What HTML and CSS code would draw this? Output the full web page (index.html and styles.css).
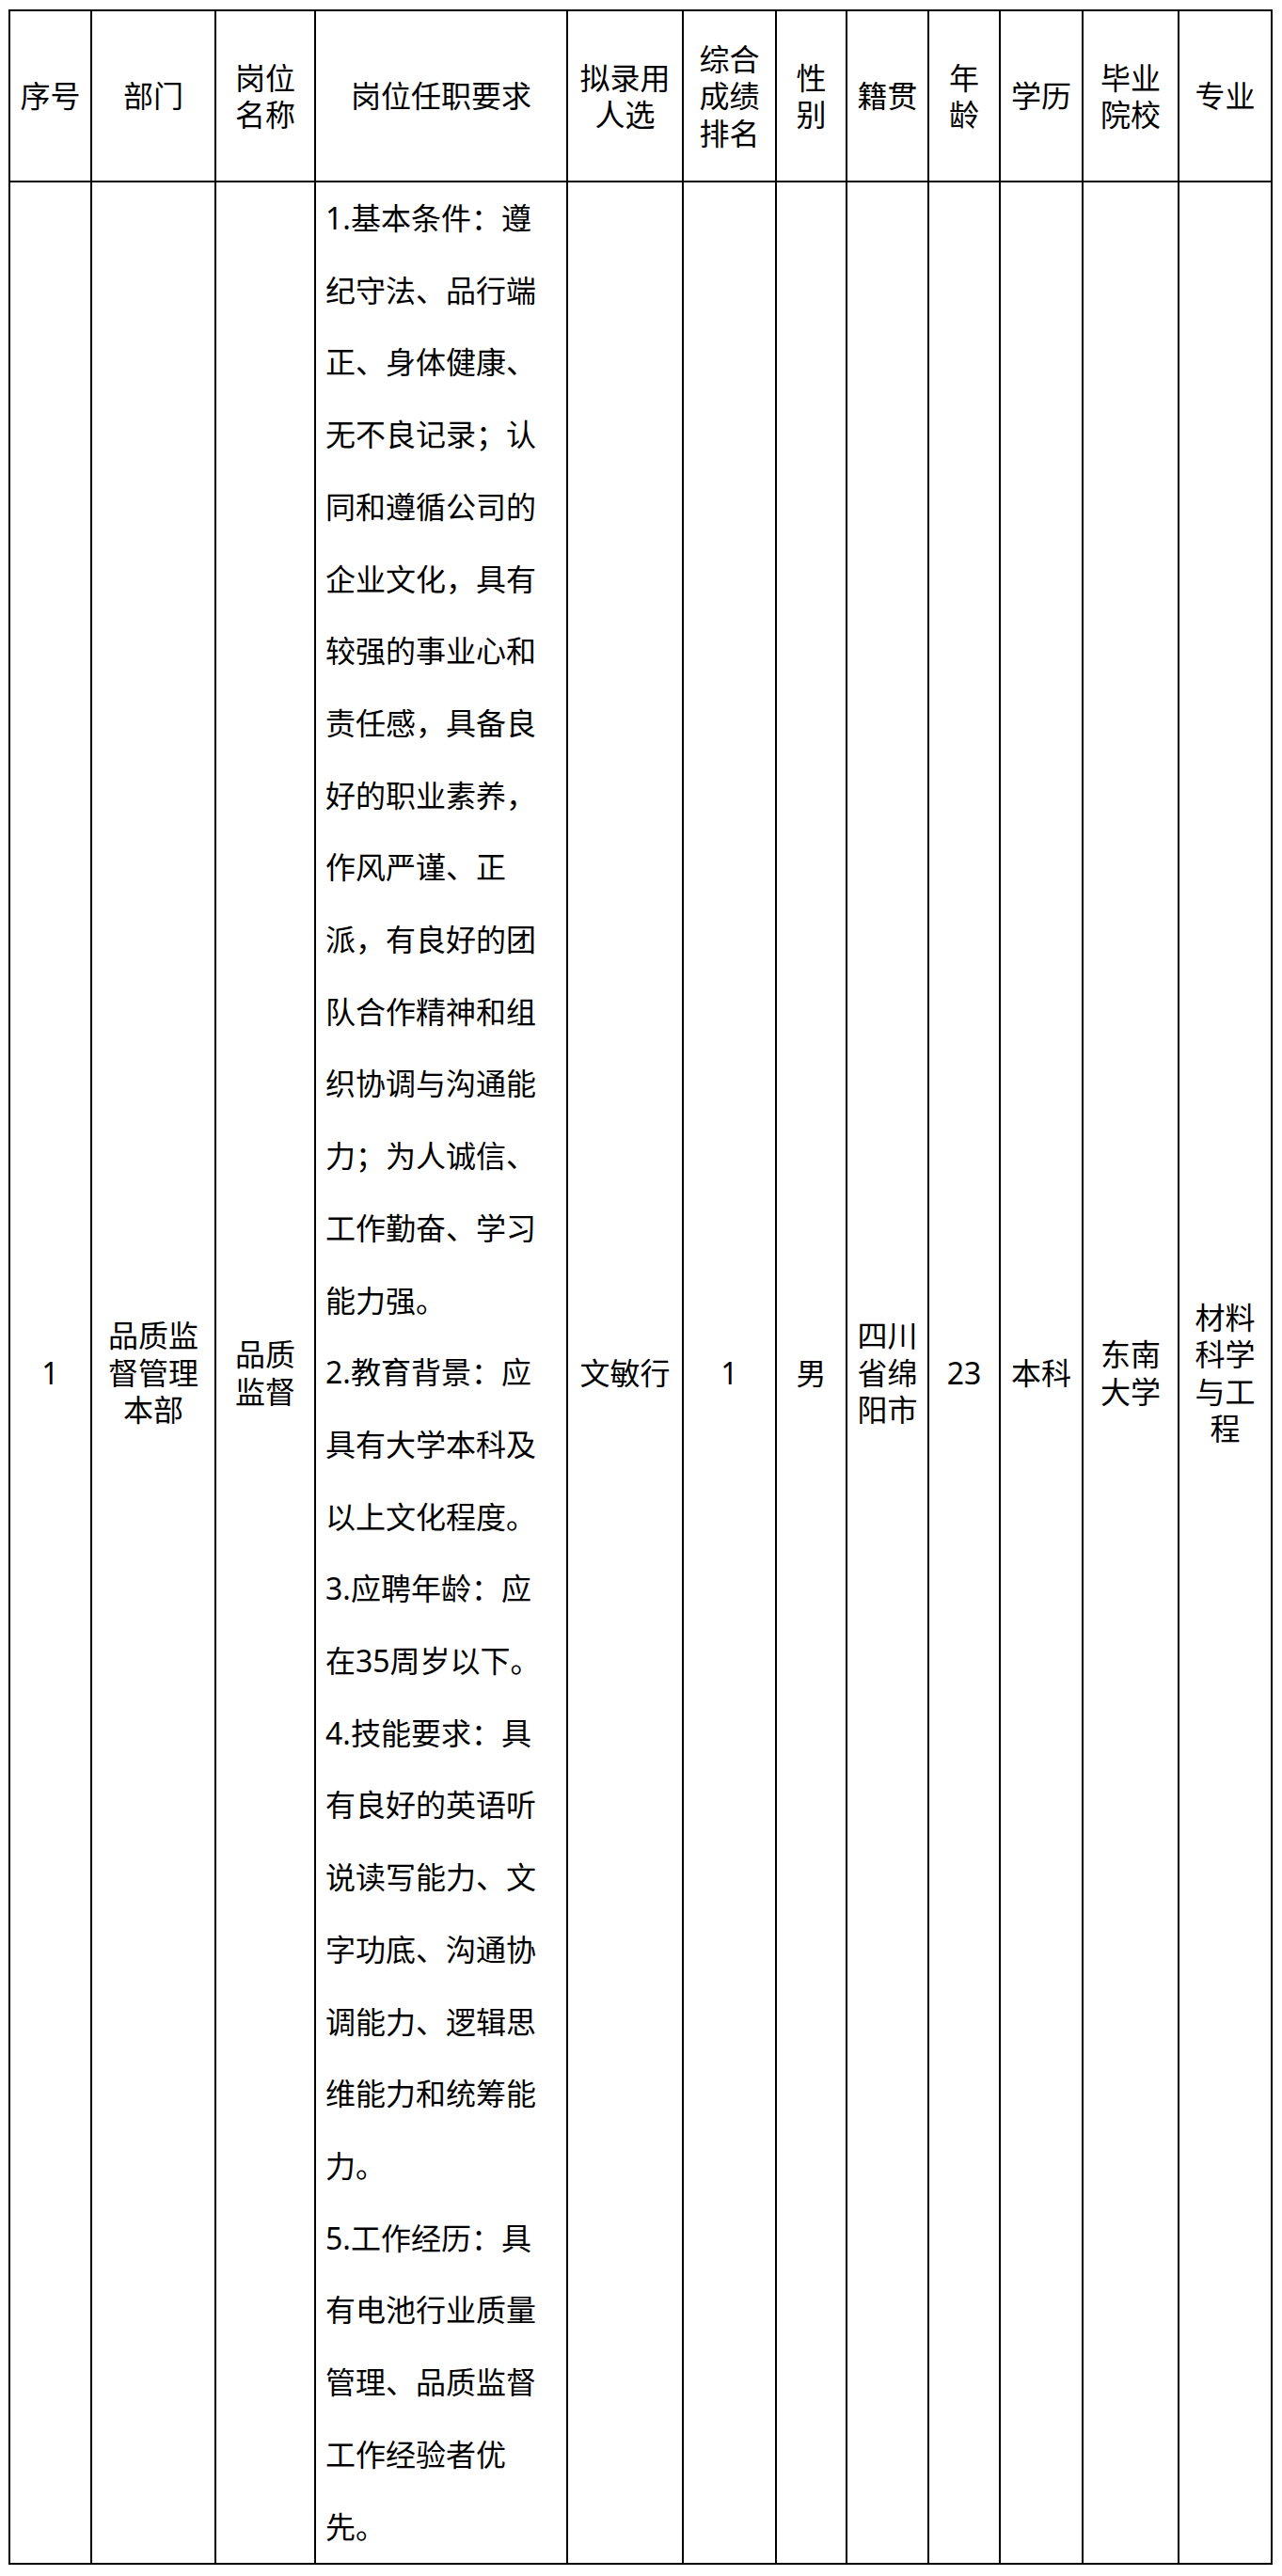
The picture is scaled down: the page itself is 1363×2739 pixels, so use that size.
FILE: index.html
```html
<!DOCTYPE html>
<html lang="zh-CN">
<head>
<meta charset="utf-8">
<title>拟录用人选</title>
<link rel="stylesheet" href="styles.css">
</head>
<body>
<table class="grid">
  <colgroup>
    <col class="c-no">
    <col class="c-dept">
    <col class="c-post">
    <col class="c-req">
    <col class="c-name">
    <col class="c-rank">
    <col class="c-sex">
    <col class="c-home">
    <col class="c-age">
    <col class="c-edu">
    <col class="c-school">
    <col class="c-major">
  </colgroup>
  <thead>
    <tr class="head">
      <th>序号</th>
      <th>部门</th>
      <th>岗位名称</th>
      <th>岗位任职要求</th>
      <th>拟录用人选</th>
      <th>综合成绩排名</th>
      <th>性别</th>
      <th>籍贯</th>
      <th>年龄</th>
      <th>学历</th>
      <th>毕业院校</th>
      <th>专业</th>
    </tr>
  </thead>
  <tbody>
    <tr class="row">
      <td>1</td>
      <td>品质监督管理本部</td>
      <td>品质监督</td>
      <td class="req">1.基本条件：遵纪守法、品行端正、身体健康、无不良记录；认同和遵循公司的企业文化，具有较强的事业心和责任感，具备良好的职业素养，作风严谨、正派，有良好的团队合作精神和组织协调与沟通能力；为人诚信、工作勤奋、学习能力强。<br>2.教育背景：应具有大学本科及以上文化程度。<br>3.应聘年龄：应在35周岁以下。<br>4.技能要求：具有良好的英语听说读写能力、文字功底、沟通协调能力、逻辑思维能力和统筹能力。<br>5.工作经历：具有电池行业质量管理、品质监督工作经验者优先。</td>
      <td>文敏行</td>
      <td>1</td>
      <td>男</td>
      <td>四川省绵阳市</td>
      <td>23</td>
      <td>本科</td>
      <td>东南大学</td>
      <td>材料科学与工程</td>
    </tr>
  </tbody>
</table>
</body>
</html>
```
FILE: styles.css
```css
html, body {
  margin: 0;
  padding: 0;
  background: #ffffff;
}

body {
  font-family: "Noto Sans", "Noto Sans CJK SC", sans-serif;
  font-size: 32px;
  color: #000000;
}

.grid {
  border-collapse: collapse;
  table-layout: fixed;
  width: 1344px;
  margin: 10px 0 0 9px;
}

.grid th,
.grid td {
  border: 2px solid #000000;
  padding: 0 7px;
  text-align: center;
  vertical-align: middle;
  font-weight: normal;
  line-height: 39.5px;
  word-break: break-all;
}

.head {
  height: 182px;
}

.grid td.req {
  text-align: left;
  line-height: 76.7px;
  padding: 0 10px 0 10px;
  word-break: normal;
}

.c-no { width: 87px; }
.c-dept { width: 132px; }
.c-post { width: 106px; }
.c-req { width: 268px; }
.c-name { width: 123px; }
.c-rank { width: 99px; }
.c-sex { width: 75px; }
.c-home { width: 87px; }
.c-age { width: 76px; }
.c-edu { width: 88px; }
.c-school { width: 102px; }
.c-major { width: 99px; }
```
